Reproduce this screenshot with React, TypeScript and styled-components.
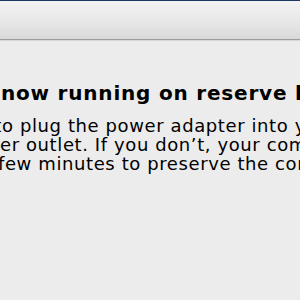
import React from "react";
import styled, { createGlobalStyle } from "styled-components";

const Global = createGlobalStyle`
  html, body { margin: 0; padding: 0; }
  body {
    width: 300px;
    height: 300px;
    overflow: hidden;
    background: #ececec;
    font-family: "DejaVu Sans", "Lucida Grande", sans-serif;
  }
`;

const Window = styled.div`
  width: 300px;
  height: 300px;
  display: flex;
  flex-direction: column;
  overflow: hidden;
  background: #ececec;
`;

const TitleBar = styled.div`
  height: 38px;
  border-top: 1px solid #1d3868;
  border-bottom: 1px solid #9c9c9c;
  background: linear-gradient(#f3f3f3, #e6e6e6 60%, #d9d9d9);
  box-shadow: 0 1px 0 #d6d6d6;
`;

const Body = styled.div`
  display: flex;
  flex-direction: column;
  padding-top: 41px;
`;

const Line = styled.div<{ $x: number; $bold?: boolean; $h: number }>`
  display: flex;
  white-space: nowrap;
  margin-left: ${(p) => p.$x}px;
  height: ${(p) => p.$h}px;
  line-height: ${(p) => p.$h}px;
  font-size: ${(p) => (p.$bold ? 20 : 18)}px;
  letter-spacing: ${(p) => (p.$bold ? 0.8 : 0.6)}px;
  font-weight: ${(p) => (p.$bold ? 700 : 400)};
  color: #000;
`;

const Hidden = styled.span`
  display: flex;
  justify-content: flex-end;
  width: 0;
`;

const Gap = styled.div<{ $h: number }>`
  height: ${(p) => p.$h}px;
`;

const Clip: React.FC<{ children: React.ReactNode }> = ({ children }) => (
  <Hidden>
    <span>{children}</span>
  </Hidden>
);

export default function App() {
  return (
    <Window>
      <Global />
      <TitleBar />
      <Body>
        <Line $x={1} $bold $h={24}>
          <Clip>You are&nbsp;</Clip>
          now running on reserve battery power.
        </Line>
        <Gap $h={11} />
        <Line $x={2} $h={19}>
          <Clip>Please take a moment t</Clip>
          o plug the power adapter into your computer and a
        </Line>
        <Line $x={0} $h={19}>
          <Clip>pow</Clip>
          er outlet. If you don’t, your computer will go to sleep in a
        </Line>
        <Line $x={-2} $h={19}>
          few minutes to preserve the contents of memory.
        </Line>
      </Body>
    </Window>
  );
}
